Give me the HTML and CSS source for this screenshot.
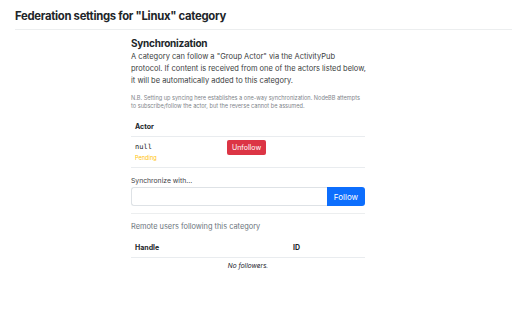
FILE: index.html
```html
<!DOCTYPE html>
<html>
<head>
<meta charset="utf-8">
<link rel="stylesheet" href="styles.css">
</head>
<body>
<header class="page-head">
  <h1 class="page-title">Federation settings for "Linux" category</h1>
</header>
<main class="content">
  <h2 class="section-title">Synchronization</h2>
  <p class="lead">A category can follow a "Group Actor" via the ActivityPub<br>protocol. If content is received from one of the actors listed below,<br>it will be automatically added to this category.</p>
  <p class="note">N.B. Setting up syncing here establishes a one-way synchronization. NodeBB attempts to subscribe/follow the actor, but the reverse cannot be assumed.</p>

  <table class="tbl actors">
    <thead><tr><th class="col-actor">Actor</th><th></th></tr></thead>
    <tbody>
      <tr>
        <td class="col-actor"><code class="actor-id">null</code><span class="pending">Pending</span></td>
        <td><button class="btn btn-danger">Unfollow</button></td>
      </tr>
    </tbody>
  </table>

  <label class="sync-label">Synchronize with...</label>
  <div class="input-group">
    <input class="form-control" type="text">
    <button class="btn btn-primary">Follow</button>
  </div>
  <hr class="divider">

  <p class="followers-title">Remote users following this category</p>
  <table class="tbl followers">
    <thead><tr><th class="col-handle">Handle</th><th>ID</th></tr></thead>
    <tbody><tr><td colspan="2" class="empty">No followers.</td></tr></tbody>
  </table>
</main>
</body>
</html>
```
FILE: styles.css
```css
* { box-sizing: border-box; }
body {
  margin: 0;
  font-family: Inter, "Noto Sans", sans-serif;
  color: #212529;
  background: #fff;
}
.page-head {
  margin-left: 15px;
  border-bottom: 1px solid #eceeef;
  height: 30px;
  padding-top: 8px;
}
.page-title {
  margin: 0;
  font-size: 11.3px;
  font-weight: 700;
  letter-spacing: -0.025em;
  line-height: 16px;
  color: #212529;
}
.content {
  width: 234px;
  margin-left: 131px;
  padding-top: 6px;
}
.section-title {
  margin: 0;
  font-size: 10px;
  font-weight: 700;
  letter-spacing: -0.025em;
  line-height: 14px;
}
.lead {
  margin: 1px 0 0;
  font-size: 7.5px;
  line-height: 12px;
  white-space: nowrap;
  color: #3a3d40;
}
.note {
  margin: 7px 0 0;
  font-size: 5.6px;
  line-height: 8px;
  color: #80858a;
}
.tbl {
  width: 100%;
  border-collapse: collapse;
}
.tbl th {
  text-align: left;
  font-size: 7px;
  font-weight: 700;
  line-height: 10px;
  padding: 4px;
  border-bottom: 1px solid #e9ecef;
}
.tbl td {
  padding: 4px;
  border-bottom: 1px solid #e9ecef;
  vertical-align: top;
}
.actors { margin-top: 8px; }
.actors .col-actor { width: 92px; }
.actor-id {
  display: block;
  font-family: "DejaVu Sans Mono", monospace;
  font-size: 7px;
  line-height: 12px;
  color: #212529;
}
.pending {
  display: block;
  font-size: 5.6px;
  line-height: 10px;
  color: #ffc107;
}
.btn {
  font-family: Inter, "Noto Sans", sans-serif;
  border: 0;
  color: #fff;
  cursor: pointer;
}
.btn-danger {
  display: block;
  background: #dc3545;
  font-size: 7px;
  height: 15px;
  padding: 0 5px;
  border-radius: 2px;
  margin-top: -1px;
}
.sync-label {
  display: block;
  margin-top: 8px;
  font-size: 6.8px;
  line-height: 10px;
  color: #3f4347;
}
.input-group {
  display: flex;
  margin-top: 1px;
  height: 19px;
}
.form-control {
  flex: 1;
  min-width: 0;
  border: 1px solid #dee2e6;
  border-right: 0;
  border-radius: 3px 0 0 3px;
  outline: none;
}
.btn-primary {
  width: 38px;
  background: #0d6efd;
  font-size: 8px;
  border-radius: 0 3px 3px 0;
}
.divider {
  margin: 7px 0 0;
  border: 0;
  border-top: 1px solid #eceeef;
}
.followers-title {
  margin: 8px 0 0;
  font-size: 7.4px;
  line-height: 10px;
  color: #6c757d;
}
.followers { margin-top: 7px; }
.followers .col-handle { width: 158px; }
.empty {
  text-align: center;
  font-style: italic;
  font-size: 6.5px;
  line-height: 8px;
  color: #212529;
  border-bottom: 0 !important;
}
```
